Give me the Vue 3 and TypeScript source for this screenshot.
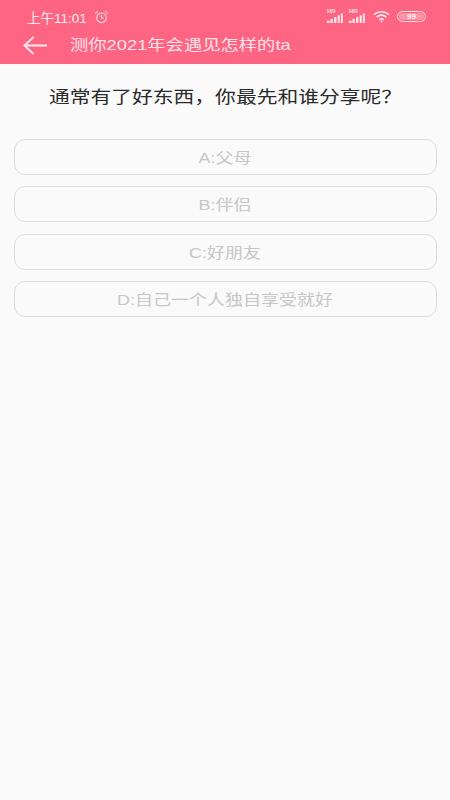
<script setup lang="ts">
const options: string[] = ['A:父母', 'B:伴侣', 'C:好朋友', 'D:自己一个人独自享受就好']
</script>

<template>
  <div class="page">
    <header class="head">
      <div class="status">
        <div class="status-left">
          <span class="time">上午11:01</span>
          <svg class="alarm" width="15" height="14" viewBox="0 0 15 14" fill="none" stroke="#ffdfe6" stroke-width="1.1">
            <circle cx="7.5" cy="7.8" r="4.8" />
            <path d="M7.5 5v3h2.2M1.2 3.6 3.6 1.2M13.8 3.6 11.4 1.2" />
          </svg>
        </div>
        <div class="status-right">
          <div v-for="n in 2" :key="n" class="sig">
            <span class="hd">HD</span>
            <svg width="18" height="10" viewBox="0 0 18 11" fill="#ffe6ec">
              <rect x="0" y="8.5" width="3" height="2.5" />
              <rect x="4" y="6.5" width="2.6" height="4.5" />
              <rect x="8" y="4.5" width="2.6" height="6.5" />
              <rect x="12" y="2.5" width="2.2" height="8.5" />
              <rect x="15.4" y="0.5" width="2.2" height="10.5" />
            </svg>
          </div>
          <svg class="wifi" width="18" height="13" viewBox="0 0 18 13" fill="none" stroke="#ffe6ec" stroke-width="1.7">
            <path d="M1 4.6C5.4 .8 11.6 .8 16 4.6" />
            <path d="M3.6 7.2C6.6 4.8 10.4 4.8 13.4 7.2" />
            <path d="M6.2 9.6C7.6 8.6 9.4 8.6 10.8 9.6" />
            <circle cx="8.5" cy="11.6" r="1" fill="#ffe6ec" stroke="none" />
          </svg>
          <div class="battery">99</div>
        </div>
      </div>
      <div class="bar">
        <svg class="back" width="24" height="19" viewBox="0 0 24 19" fill="none" stroke="#ffe9ee" stroke-width="1.8">
          <path d="M1.5 9.5H24M10.5 1 1.5 9.5 10.5 18" />
        </svg>
        <span class="title">测你2021年会遇见怎样的ta</span>
      </div>
    </header>

    <main class="content">
      <h1 class="question"><span class="wide">通常有了好东西，你最先和谁分享呢？</span></h1>
      <ul class="options">
        <li v-for="option in options" :key="option" class="option">
          <span class="wide-option">{{ option }}</span>
        </li>
      </ul>
    </main>
  </div>
</template>

<style scoped>
.page {
  width: 450px;
  height: 800px;
  background: #fafafa;
  font-family: "Liberation Sans", "Noto Sans CJK SC", sans-serif;
  overflow: hidden;
}
.head {
  height: 64px;
  background: #fe6583;
  box-sizing: border-box;
  padding: 8px 24px 0 23px;
}
.status {
  height: 17px;
  display: flex;
  justify-content: space-between;
  align-items: center;
}
.status-left {
  display: flex;
  align-items: center;
  gap: 7px;
  padding-left: 4px;
}
.time {
  font-size: 13.5px;
  color: #ffeaef;
}
.status-right {
  display: flex;
  align-items: center;
}
.sig {
  position: relative;
  width: 18px;
  height: 13px;
  display: flex;
  align-items: flex-end;
  margin-right: 4px;
}
.hd {
  position: absolute;
  left: 1px;
  top: -2px;
  font-size: 6px;
  font-weight: 700;
  color: #ffe6ec;
}
.wifi {
  margin-left: 3px;
  margin-right: 6px;
}
.battery {
  width: 29px;
  height: 11px;
  box-sizing: border-box;
  border: 1px solid #ffdfe6;
  border-radius: 6px;
  padding: 1px;
  font-size: 8px;
  font-weight: 700;
  line-height: 7px;
  text-align: center;
  color: #fff1f4;
  background: rgba(255, 255, 255, 0.3);
  background-clip: content-box;
}
.bar {
  height: 39px;
  display: flex;
  align-items: center;
  gap: 23px;
}
.back {
  flex: none;
  margin-top: 1px;
}
.title {
  display: inline-block;
  font-size: 15px;
  line-height: 18px;
  color: #ffe3ea;
  white-space: nowrap;
  transform: scaleX(1.22);
  transform-origin: left center;
}
.content {
  padding: 22px 13px 0 14px;
}
.question {
  margin: 0 0 29px;
  font-size: 17px;
  line-height: 24px;
  font-weight: 400;
  text-align: center;
  color: #2a2a2a;
}
.wide {
  display: inline-block;
  transform: scaleX(1.222);
  white-space: nowrap;
}
.options {
  list-style: none;
  margin: 0;
  padding: 0;
  display: flex;
  flex-direction: column;
  gap: 11.3px;
}
.option {
  height: 36px;
  box-sizing: border-box;
  border: 1.5px solid #d9dcdc;
  border-radius: 11px;
  font-size: 15px;
  line-height: 35px;
  text-align: center;
  color: #c6c6c6;
}
.wide-option {
  display: inline-block;
  transform: scaleX(1.2);
}
</style>
